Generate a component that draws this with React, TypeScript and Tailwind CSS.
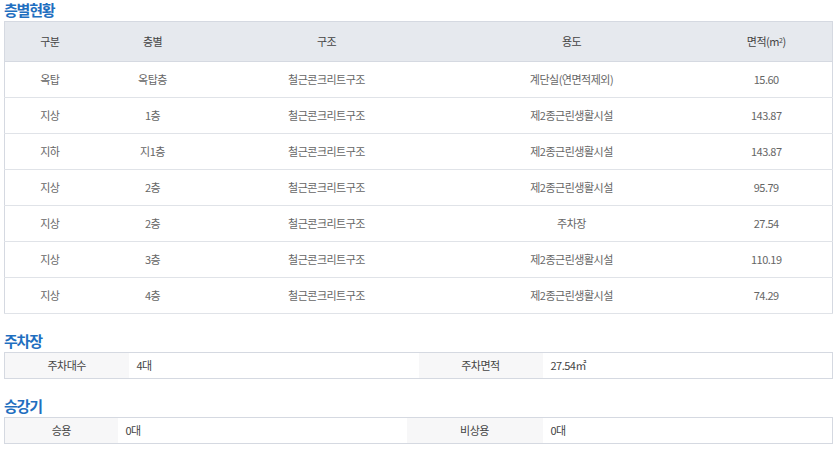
const floors = [
  ['옥탑', '옥탑층', '철근콘크리트구조', '계단실(연면적제외)', '15.60'],
  ['지상', '1층', '철근콘크리트구조', '제2종근린생활시설', '143.87'],
  ['지하', '지1층', '철근콘크리트구조', '제2종근린생활시설', '143.87'],
  ['지상', '2층', '철근콘크리트구조', '제2종근린생활시설', '95.79'],
  ['지상', '2층', '철근콘크리트구조', '주차장', '27.54'],
  ['지상', '3층', '철근콘크리트구조', '제2종근린생활시설', '110.19'],
  ['지상', '4층', '철근콘크리트구조', '제2종근린생활시설', '74.29'],
]

function Title({ children, className }: { children: React.ReactNode; className?: string }) {
  return (
    <h3
      className={`h-[21px] pt-[2px] text-[15px] font-bold leading-[16px] tracking-[-1.2px] text-[#1f6fc0] ${className ?? ''}`}
    >
      {children}
    </h3>
  )
}

function InfoTable({
  items,
  widths,
}: {
  items: [string, string][]
  widths: number[]
}) {
  return (
    <table className="w-[828px] table-fixed border-collapse border border-[#d5d9e1] text-[11px] tracking-[-0.5px] text-[#555]">
      <colgroup>
        {widths.map((w, i) => (
          <col key={i} style={{ width: w }} />
        ))}
      </colgroup>
      <tbody>
        <tr className="h-[26px]">
          {items.map(([label, value]) => [
            <th key={label} className="bg-[#f7f7f8] text-center font-normal text-[#444]">
              {label}
            </th>,
            <td key={label + 'v'} className="pl-2 text-left text-[#444]">
              {value}
            </td>,
          ])}
        </tr>
      </tbody>
    </table>
  )
}

export default function App() {
  return (
    <div
      className="w-[840px] bg-white pl-1"
      style={{ fontFamily: '"Noto Sans CJK KR", "Noto Sans", sans-serif' }}
    >
      <Title>층별현황</Title>
      <table className="w-[828px] table-fixed border-collapse border border-[#d5d9e1] text-[11px] tracking-[-0.5px] text-[#666]">
        <colgroup>
          <col className="w-[90px]" />
          <col className="w-[116px]" />
          <col className="w-[232px]" />
          <col className="w-[258px]" />
          <col className="w-[132px]" />
        </colgroup>
        <thead>
          <tr className="h-[40px] bg-[#e6e9ee] border-b border-[#d5d9e1]">
            <th className="font-normal text-[#444]">구분</th>
            <th className="font-normal text-[#444]">층별</th>
            <th className="font-normal text-[#444]">구조</th>
            <th className="font-normal text-[#444]">용도</th>
            <th className="font-normal text-[#444]">
              면적(m<sup className="text-[7px]">2</sup>)
            </th>
          </tr>
        </thead>
        <tbody>
          {floors.map((row, i) => (
            <tr key={i} className="h-[36px] border-b border-[#e0e3e8] text-center">
              {row.map((cell, j) => (
                <td key={j}>{cell}</td>
              ))}
            </tr>
          ))}
        </tbody>
      </table>

      <Title className="mt-[17px]">주차장</Title>
      <InfoTable
        items={[
          ['주차대수', '4대'],
          ['주차면적', '27.54㎡'],
        ]}
        widths={[124, 290, 124, 290]}
      />

      <Title className="mt-[17px]">승강기</Title>
      <InfoTable
        items={[
          ['승용', '0대'],
          ['비상용', '0대'],
        ]}
        widths={[113, 289, 136, 290]}
      />
      <div className="h-[12px]" />
    </div>
  )
}
